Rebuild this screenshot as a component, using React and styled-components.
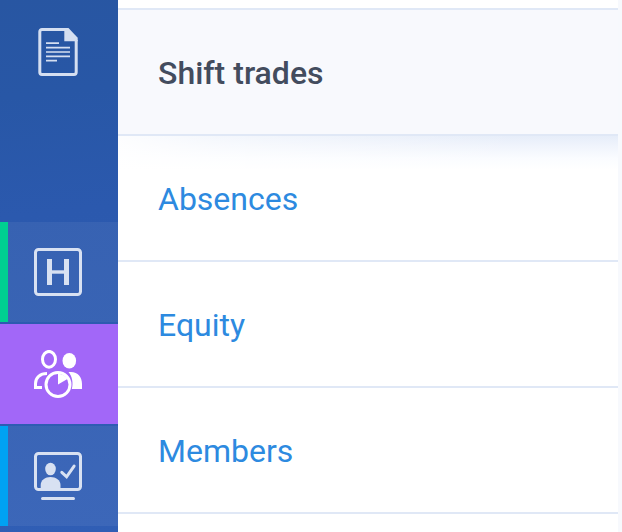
import React from "react";
import styled, { createGlobalStyle } from "styled-components";

const GlobalStyle = createGlobalStyle`
  * { box-sizing: border-box; }
  body { margin: 0; overflow: hidden; font-family: Roboto, sans-serif; }
`;

const Screen = styled.div`
  display: flex;
  width: 622px;
  height: 532px;
  overflow: hidden;
  background: #f7f9fd;
`;

const Sidebar = styled.nav`
  display: flex;
  flex: 0 0 118px;
  flex-direction: column;
  justify-content: space-between;
  padding-bottom: 6px;
  background: linear-gradient(174deg, #2856a2 0%, #2857a6 18%, #2b59ae 40%, #305eb5 100%);
`;

const SidebarLink = styled.a`
  display: flex;
  justify-content: center;
  height: 104px;
  padding: 28px 2px 0 0;
  color: #d5dff1;
`;

const Modules = styled.div`
  display: flex;
  flex-direction: column;
  gap: 2px;
`;

const Module = styled.a`
  display: flex;
  align-items: center;
  justify-content: center;
  height: 100px;
  padding-right: 2px;
  color: ${({ $active }) => ($active ? "#ffffff" : "#d8e1f2")};
  background: ${({ $active }) => ($active ? "#a267f8" : "rgba(255, 255, 255, 0.06)")};
  box-shadow: inset 8px 0 ${({ $accent }) => $accent};
`;

const Icon = styled.svg`
  display: block;
  width: 48px;
  height: 48px;
  fill: none;
  stroke: currentColor;
  stroke-width: 3;
`;

const Menu = styled.main`
  display: flex;
  flex: 0 0 500px;
  flex-direction: column;
  padding-top: 8px;
  background: #ffffff;
`;

const MenuItem = styled.a`
  display: flex;
  flex: 0 0 126px;
  align-items: center;
  padding: 2px 40px 0;
  border-top: 2px solid #e0e8f6;
  color: #2d8ae0;
  font-size: 32px;
  line-height: 40px;
`;

const ActiveItem = styled(MenuItem)`
  background: #f8f9fd;
  color: #434c5e;
  font-weight: 500;
`;

const ShadedItem = styled(MenuItem)`
  background:
    linear-gradient(90deg, rgba(255, 255, 255, 0.9) 0, rgba(255, 255, 255, 0.55) 100px, rgba(255, 255, 255, 0) 400px) 0 0 / 100% 34px no-repeat,
    linear-gradient(180deg, #e6edf9 0, #f0f4fc 10px, #fafcff 22px, #ffffff 34px);
`;

const EndRule = styled.div`
  height: 2px;
  background: #e0e8f6;
`;

function DocumentIcon() {
  return (
    <Icon viewBox="0 0 48 48">
      <path d="M31 1.5H8a2.2 2.2 0 0 0-2.2 2.2v40.6A2.2 2.2 0 0 0 8 46.5h32a2.2 2.2 0 0 0 2.2-2.2V12" />
      <path d="M30.3 0h4.2l9.2 9.8v3.5H30.3Z" fill="currentColor" stroke="none" />
      <path d="M12 15.2h13M12 19.7h24M12 24h24M12 28.3h24M12 32.7h11" strokeWidth="1.7" />
    </Icon>
  );
}

function HospitalIcon() {
  return (
    <Icon viewBox="0 0 48 48">
      <rect x="1.5" y="1.5" width="45" height="45" rx="3" />
      <path d="M15.5 11v26M32.5 11v26" strokeWidth="5" />
      <path d="M17 24h14" strokeWidth="3.4" />
    </Icon>
  );
}

function TeamIcon() {
  return (
    <Icon viewBox="0 0 48 48">
      <ellipse cx="15" cy="9.3" rx="6.5" ry="7.9" />
      <ellipse cx="35.3" cy="10.7" rx="6.8" ry="7.8" fill="currentColor" stroke="none" />
      <path d="M13 23.6c-7 0-11.5 4.2-11.5 10v3.8H8" />
      <path d="M34.5 22H37c7 0 11 5 11 12v5H37.8c1.7-6 .3-13-3.3-17Z" fill="currentColor" stroke="none" />
      <circle cx="24" cy="34.5" r="12" />
      <path d="M24 34.5V23.8c4 0 7.3 2.1 9.4 5.3Z" fill="currentColor" stroke="none" />
    </Icon>
  );
}

function AttendanceIcon() {
  return (
    <Icon viewBox="0 0 48 48">
      <rect x="1.5" y="1.5" width="45" height="36" rx="3" />
      <ellipse cx="16.5" cy="17" rx="5.3" ry="6.3" fill="currentColor" stroke="none" />
      <path d="M6.7 37v-4c0-5 4.5-8 9.8-8s10 3 10 8v4Z" fill="currentColor" stroke="none" />
      <path d="m27.8 20.3 4.8 4.5 7.5-10.7M8.5 46.5h31" strokeLinecap="round" />
    </Icon>
  );
}

export default function App() {
  return (
    <>
      <GlobalStyle />
      <Screen>
        <Sidebar>
          <SidebarLink><DocumentIcon /></SidebarLink>
          <Modules>
            <Module $accent="#00cf91"><HospitalIcon /></Module>
            <Module $active $accent="#a267f8"><TeamIcon /></Module>
            <Module $accent="#00a2f3"><AttendanceIcon /></Module>
          </Modules>
        </Sidebar>
        <Menu>
          <ActiveItem>Shift trades</ActiveItem>
          <ShadedItem>Absences</ShadedItem>
          <MenuItem>Equity</MenuItem>
          <MenuItem>Members</MenuItem>
          <EndRule />
        </Menu>
      </Screen>
    </>
  );
}
